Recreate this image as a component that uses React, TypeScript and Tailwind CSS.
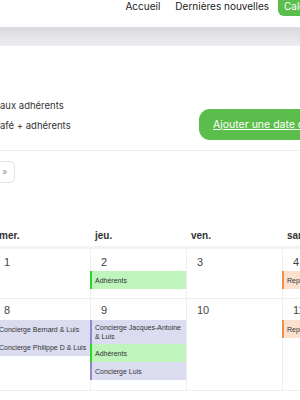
import React from 'react';

type Ev = { label: string; kind: 'green' | 'lav' | 'peach' };

const evClass: Record<Ev['kind'], string> = {
  green: 'bg-[#bff5bd] border-l-2 border-[#2bd42b]',
  lav: 'bg-[#dcdcf0] border-l-2 border-[#8a8ad0]',
  peach: 'bg-[#fbe0cd] border-l-2 border-[#e9914d]',
};

const weeks: { day: number; events: Ev[] }[][] = [
  [
    { day: 1, events: [] },
    { day: 2, events: [{ label: 'Adhérents', kind: 'green' }] },
    { day: 3, events: [] },
    { day: 4, events: [{ label: 'Repas', kind: 'peach' }] },
  ],
  [
    {
      day: 8,
      events: [
        { label: 'Concierge Bernard & Luis', kind: 'lav' },
        { label: 'Concierge Philippe D & Luis', kind: 'lav' },
      ],
    },
    {
      day: 9,
      events: [
        { label: 'Concierge Jacques-Antoine & Luis', kind: 'lav' },
        { label: 'Adhérents', kind: 'green' },
        { label: 'Concierge Luis', kind: 'lav' },
      ],
    },
    { day: 10, events: [] },
    { day: 11, events: [{ label: 'Repas', kind: 'peach' }] },
  ],
];

const heads = ['mer.', 'jeu.', 'ven.', 'sam.'];

export default function App() {
  return (
    <div className="w-[300px] h-[400px] overflow-hidden bg-white font-['Inter',sans-serif] text-[#222]">
      {/* top nav */}
      <div className="h-[27px] flex justify-end items-start text-[10px] -mr-[40px]">
        <span className="leading-[12px] mr-[15px]">Accueil</span>
        <span className="leading-[12px] mr-[9px]">Dernières nouvelles</span>
        <span className="bg-[#5bbd4b] text-white rounded-b-[6px] px-[6px] leading-[13px] pb-[3px] w-[62px]">Calendrier</span>
      </div>
      <div className="h-[19px] bg-gradient-to-b from-[#d9d9de] to-[#ededf1]" />

      {/* legend + add button */}
      <div className="mt-[48px] flex justify-between items-start">
        <div className="text-[9.5px] text-[#333] leading-[20px] pt-[2px]">
          <div>aux adhérents</div>
          <div>afé + adhérents</div>
        </div>
        <div className="mt-[15px] -mr-[40px] w-[141px] h-[31px] rounded-[11px] bg-[#5bbd4b] text-white text-[10.5px] flex items-center pl-[14px] whitespace-nowrap overflow-hidden">
          <span className="underline">Ajouter une date de repas</span>
        </div>
      </div>
      <div className="mt-[10px] border-t border-[#ececec]" />

      {/* nav arrows */}
      <div className="mt-[10px] -ml-[6px] w-[21px] h-[22px] border border-[#e4e4e4] rounded-[5px] flex items-center justify-center text-[9px] text-[#999]">
        »
      </div>

      {/* calendar */}
      <div className="mt-[47px] -ml-[6px] w-[384px] font-['Liberation_Sans',Arial,sans-serif]">
        <div className="grid grid-cols-4 border-b-[3px] border-[#f2f2f2]">
          {heads.map((h) => (
            <div key={h} className="pl-[5px] pb-[4px] text-[10px] leading-[12px] font-semibold text-[#333]">
              {h}
            </div>
          ))}
        </div>
        {weeks.map((w, wi) => (
          <div key={wi} className={`grid grid-cols-4 border-b border-[#eeeeee] ${wi === 0 ? 'h-[50px]' : 'h-[92px]'}`}>
            {w.map((c, ci) => (
              <div key={ci} className={`${ci > 0 ? 'border-l border-[#eeeeee]' : ''} flex flex-col`}>
                <div className={`pl-[10px] text-[11px] leading-[12px] text-[#444] ${wi === 0 ? 'pt-[7px] pb-[3px]' : 'pt-[5px] pb-[4px]'}`}>
                  {c.day}
                </div>
                {c.events.map((e, ei) => (
                  <div
                    key={ei}
                    className={`${evClass[e.kind]} ${ci > 0 ? '-ml-px' : ''} min-h-[18px] flex items-center pl-[3px] pr-[2px] py-[3px] text-[7px] leading-[9px] text-[#333] overflow-hidden`}
                  >
                    <span>{e.label}</span>
                  </div>
                ))}
              </div>
            ))}
          </div>
        ))}
      </div>
    </div>
  );
}
